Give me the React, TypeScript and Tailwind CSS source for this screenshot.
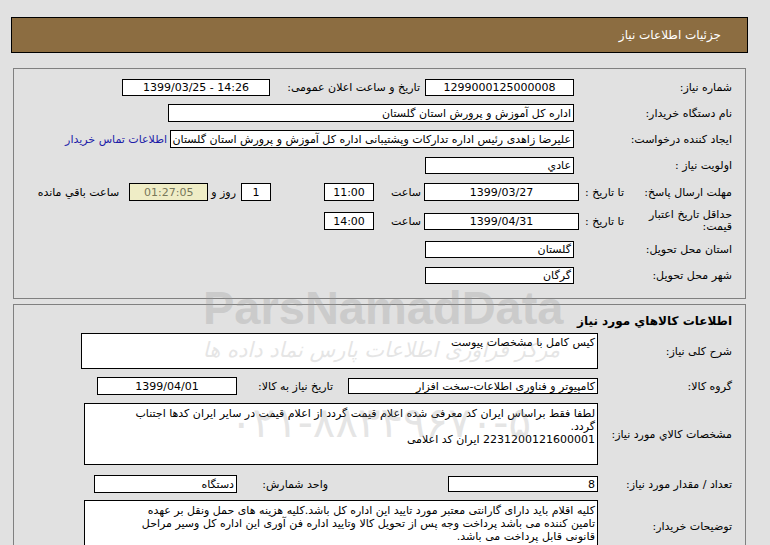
import React from 'react';

// Tender details page (RTL form, read-only fields)

function Field({ w, h = 17, center, ltr, children, className = '' }: { w: number; h?: number; center?: boolean; ltr?: boolean; children?: React.ReactNode; className?: string }) {
  return (
    <div
      dir={ltr ? 'ltr' : undefined}
      className={`shrink-0 border border-black bg-white px-[2px] whitespace-nowrap overflow-hidden flex items-center ${center ? 'justify-center' : 'justify-start'} ${className}`}
      style={{ width: w, height: h }}
    >
      {children}
    </div>
  );
}

function Label({ w, children, className = '' }: { w: number; children?: React.ReactNode; className?: string }) {
  return (
    <div className={`shrink-0 whitespace-nowrap ${className}`} style={{ width: w }}>
      {children}
    </div>
  );
}

export default function App() {
  return (
    <div dir="rtl" className="relative min-h-screen overflow-hidden bg-[#e1e1e1] pt-[17px] font-['DejaVu_Sans',sans-serif] text-[11px] leading-[13px] text-black">
      {/* header bar */}
      <div className="ml-[11px] mr-[22px] flex h-[36px] items-center border border-black bg-[#8c6d41] pr-[26px] text-[12px] text-white">
        جزئیات اطلاعات نیاز
      </div>

      {/* section 1 */}
      <div className="ml-[13px] mr-[24px] mt-[15px] h-[231px] border border-[#808080] pr-[13px] pt-[5px]">
        <div className="flex h-[26px] items-center">
          <Label w={158}>شماره نیاز:</Label>
          <Field w={149} center ltr>1299000125000008</Field>
          <Label w={155} className="pr-[5px]">تاریخ و ساعت اعلان عمومی:</Label>
          <Field w={148} center ltr>1399/03/25 - 14:26</Field>
        </div>
        <div className="flex h-[26px] items-center">
          <Label w={158}>نام دستگاه خریدار:</Label>
          <Field w={406} h={18}>اداره کل آموزش و پرورش استان گلستان</Field>
        </div>
        <div className="flex h-[26px] items-center">
          <Label w={158}>ایجاد کننده درخواست:</Label>
          <Field w={404} h={18}>علیرضا زاهدی رئیس اداره تدارکات وپشتیبانی اداره کل آموزش و پرورش استان گلستان</Field>
          <a href="#" className="mr-[3px] whitespace-nowrap text-[#1c1ca8]">اطلاعات تماس خریدار</a>
        </div>
        <div className="flex h-[26px] items-center">
          <Label w={158}>اولویت نیاز :</Label>
          <Field w={149}>عادي</Field>
        </div>
        <div className="flex h-[28px] items-center">
          <Label w={108}>مهلت ارسال پاسخ:</Label>
          <Label w={45}>تا تاریخ :</Label>
          <Field w={155} h={18} center ltr>1399/03/27</Field>
          <Label w={50} className="pr-[3px]">ساعت</Label>
          <Field w={50} h={18} center ltr>11:00</Field>
          <div className="w-[53px] shrink-0" />
          <Field w={30} h={18} center>1</Field>
          <span className="mr-[5px] whitespace-nowrap">روز و</span>
          <Field w={79} h={18} center ltr className="mr-[3px] !bg-[#efedc6] text-[#77775a]">01:27:05</Field>
          <span className="mr-[10px] whitespace-nowrap">ساعت باقي مانده</span>
        </div>
        <div className="flex h-[30px] items-center">
          <Label w={108} className="leading-[12px]">
            حداقل تاریخ اعتبار
            <br />
            قیمت:
          </Label>
          <Label w={45}>تا تاریخ :</Label>
          <Field w={155} center ltr>1399/04/31</Field>
          <Label w={50} className="pr-[3px]">ساعت</Label>
          <Field w={50} h={18} center ltr>14:00</Field>
        </div>
        <div className="flex h-[26px] items-center">
          <Label w={158}>استان محل تحویل:</Label>
          <Field w={149}>گلستان</Field>
        </div>
        <div className="flex h-[26px] items-center">
          <Label w={158}>شهر محل تحویل:</Label>
          <Field w={149}>گرگان</Field>
        </div>
      </div>

      {/* section 2 */}
      <div className="ml-[13px] mr-[24px] mt-[5px] h-[260px] border border-[#808080] pr-[13px] pt-[10px]">
        <div className="h-[14px] text-[12px] font-bold">اطلاعات كالاهاي مورد نياز</div>

        <div className="mt-[4px] flex h-[36px] items-center">
          <Label w={134}>شرح کلی نیاز:</Label>
          <div className="h-[36px] w-[517px] shrink-0 border border-black bg-white px-[2px] pt-[2px]">کیس کامل با مشخصات پیوست</div>
        </div>

        <div className="mt-[8px] flex h-[18px] items-center">
          <Label w={134}>گروه کالا:</Label>
          <Field w={250} h={16}>کامپیوتر و فناوری اطلاعات-سخت افزار</Field>
          <Label w={111} className="pr-[15px]">تاریخ نیاز به کالا:</Label>
          <Field w={140} h={18} center ltr>1399/04/01</Field>
        </div>

        <div className="mt-[8px] flex h-[62px] items-center">
          <Label w={134}>مشخصات کالاي مورد نياز:</Label>
          <div className="h-[62px] w-[514px] shrink-0 overflow-hidden whitespace-nowrap border border-black bg-white px-[2px] pt-[3px]">
            لطفا فقط براساس ایران کد معرفی شده اعلام قیمت گردد از اعلام قیمت در سایر ایران کدها اجتناب
            <br />
            گردد.
            <br />
            2231200121600001 ایران کد اعلامی
          </div>
        </div>

        <div className="mt-[10px] flex h-[18px] items-center">
          <Label w={134}>تعداد / مقدار مورد نیاز:</Label>
          <Field w={150} h={16}>8</Field>
          <Label w={211} className="pr-[120px]">واحد شمارش:</Label>
          <Field w={143} h={18}>دستگاه</Field>
        </div>

        <div className="mt-[7px] flex h-[52px] items-center">
          <Label w={134}>توضیحات خریدار:</Label>
          <div className="h-[52px] w-[514px] shrink-0 overflow-hidden whitespace-nowrap border border-black bg-white px-[2px] pt-[3px]">
            کلیه اقلام باید دارای گارانتی معتبر مورد تایید این اداره کل باشد.کلیه هزینه های حمل ونقل بر عهده
            <br />
            تامین کننده می باشد پرداخت وجه پس از تحویل کالا وتایید اداره فن آوری این اداره کل وسیر مراحل
            <br />
            قانونی قابل پرداخت می باشد.
          </div>
        </div>
      </div>

      {/* watermark */}
      <div className="pointer-events-none absolute left-[203px] top-[284px] font-['Liberation_Sans',sans-serif] text-[47px] font-bold leading-none text-[#9a9a9a] opacity-30" dir="ltr">
        ParsNamadData
      </div>
      <div className="pointer-events-none absolute left-[215px] top-[340px] w-[345px] whitespace-nowrap text-center text-[21px] italic leading-none text-[#9a9a9a] opacity-25">
        مرکز فراوری اطلاعات پارس نماد داده ها
      </div>
      <div className="pointer-events-none absolute left-[230px] top-[402px] font-['DejaVu_Sans',sans-serif] text-[42px] leading-none text-[#9a9a9a] opacity-25" dir="ltr">
        ۰۲۱-۸۸۳۴۹۶۷۰-۵
      </div>
    </div>
  );
}
